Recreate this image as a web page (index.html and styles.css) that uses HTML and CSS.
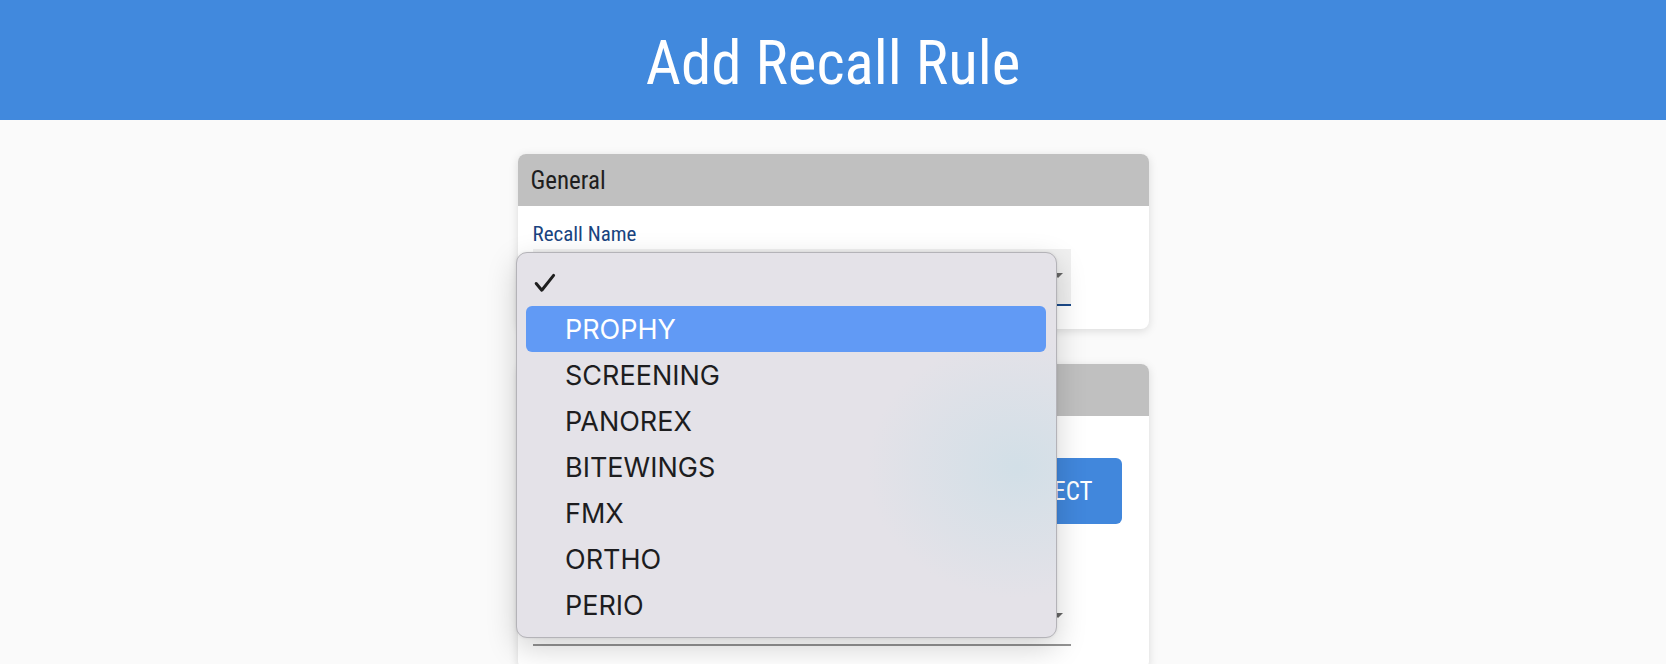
FILE: index.html
```html
<!DOCTYPE html>
<html lang="en">
<head>
<meta charset="utf-8">
<title>Add Recall Rule</title>
<link rel="stylesheet" href="styles.css">
</head>
<body>
<header class="topbar">
  <h1 class="title">Add Recall Rule</h1>
</header>
<main class="content">
  <section class="card">
    <div class="card-head">General</div>
    <div class="card-body">
      <label class="field-label">Recall Name</label>
      <div class="select-box focused"><span class="arrow"></span></div>
    </div>
  </section>
  <section class="card">
    <div class="card-head"></div>
    <div class="card-body">
      <div class="btn-row"><button class="btn">SELECT</button></div>
      <div class="field-label spacer"></div>
      <div class="select-box"><span class="arrow"></span></div>
    </div>
  </section>
</main>
<div class="menu">
  <div class="menu-item checked">
    <svg class="check" width="22" height="20" viewBox="0 0 22 20"><path d="M2.2 10.5 L7.8 17.2 L19.6 2.4" fill="none" stroke="#1f1f1f" stroke-width="3" stroke-linecap="round" stroke-linejoin="round"/></svg>
  </div>
  <div class="menu-item active">PROPHY</div>
  <div class="menu-item">SCREENING</div>
  <div class="menu-item">PANOREX</div>
  <div class="menu-item">BITEWINGS</div>
  <div class="menu-item">FMX</div>
  <div class="menu-item">ORTHO</div>
  <div class="menu-item">PERIO</div>
</div>
</body>
</html>
```
FILE: styles.css
```css
* { box-sizing: border-box; }
html, body { margin: 0; padding: 0; }
body {
  background: #fafafa;
  font-family: "Roboto Condensed", "Liberation Sans Narrow", Roboto, sans-serif;
  font-stretch: condensed;
  height: 664px;
  overflow: hidden;
  position: relative;
}
.topbar {
  height: 120px;
  background: #4189dd;
  display: flex;
  align-items: center;
  justify-content: center;
  padding-top: 6px;
}
.title {
  margin: 0;
  color: #fff;
  font-weight: 400;
  font-size: 61px;
  line-height: 1;
}
.content {
  width: 631px;
  margin: 34px auto 0;
  display: flex;
  flex-direction: column;
  gap: 35px;
}
.card {
  background: #fff;
  border-radius: 8px;
  box-shadow: 0 2px 10px rgba(0,0,0,0.13);
  overflow: hidden;
}
.card-head {
  height: 52px;
  background: #c0c0c0;
  color: #1e1e1e;
  font-size: 25px;
  padding-left: 13px;
  display: flex;
  align-items: center;
}
.card-body {
  padding: 16px 78px 23px 15px;
  display: flex;
  flex-direction: column;
}
.field-label {
  color: #1a4480;
  font-size: 21px;
  line-height: 24px;
  margin-bottom: 3px;
}
.spacer { height: 24px; }
.select-box {
  height: 57px;
  border-bottom: 2px solid #949494;
  position: relative;
}
.select-box.focused {
  background: #f0f0f0;
  border-bottom-color: #1b4a8a;
}
.arrow {
  position: absolute;
  right: 8px;
  top: 24px;
  width: 0; height: 0;
  border-left: 5px solid transparent;
  border-right: 5px solid transparent;
  border-top: 5px solid #666;
}
.btn-row {
  display: flex;
  justify-content: flex-end;
  margin: 26px -51px 38px 0;
}
.btn {
  height: 66px;
  padding: 0 29px;
  border: none;
  border-radius: 6px;
  background: #4187dc;
  color: #fff;
  font-family: inherit;
  font-stretch: condensed;
  font-size: 25px;
}
.menu {
  position: absolute;
  left: 516px;
  top: 252px;
  width: 541px;
  height: 386px;
  padding: 7px 10px 9px 9px;
  border: 1px solid #b4b3b8;
  border-radius: 11px;
  background: radial-gradient(ellipse 150px 130px at 500px 215px, #d2dfe7 0%, rgba(228,226,232,0) 100%), #e4e2e8;
  box-shadow: 0 10px 30px rgba(0,0,0,0.18), 0 0 3px rgba(0,0,0,0.08);
  font-family: Inter, "Noto Sans", sans-serif;
  font-stretch: normal;
}
.menu-item {
  height: 46px;
  padding-left: 39px;
  display: flex;
  align-items: center;
  font-size: 27px;
  color: #1d1d1f;
  border-radius: 6px;
  position: relative;
}
.menu-item.active {
  background: #619af5;
  color: #fff;
}
.check {
  position: absolute;
  left: 8px;
  top: 13px;
}
```
